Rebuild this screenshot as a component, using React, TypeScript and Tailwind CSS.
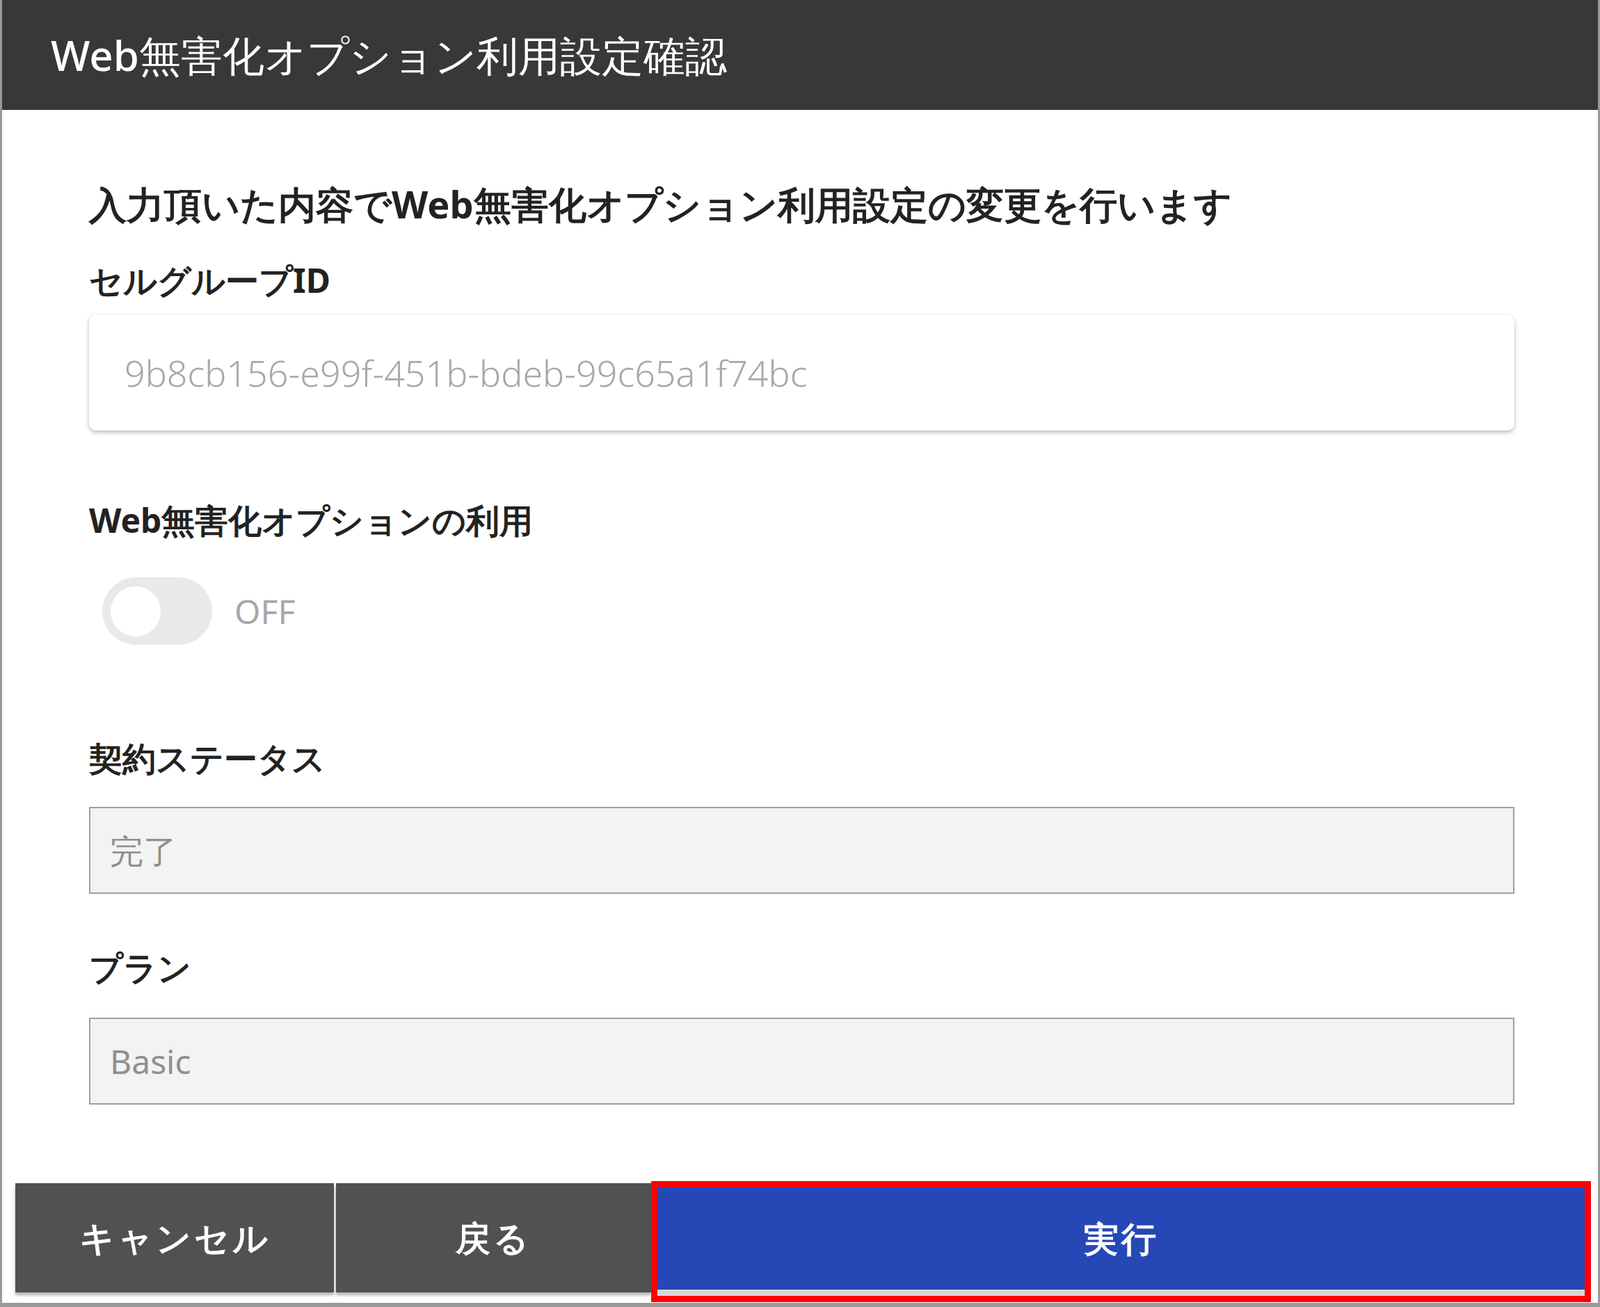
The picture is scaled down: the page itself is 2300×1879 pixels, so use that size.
const jp = "font-['Noto_Sans_CJK_JP','Noto_Sans',sans-serif]"

function Label({ children, className = '' }: { children: React.ReactNode; className?: string }) {
  return (
    <div className={`${jp} text-[48px] leading-[58px] font-bold text-[#222] ${className}`}>{children}</div>
  )
}

function ReadonlyBox({ value, className = '' }: { value: string; className?: string }) {
  return (
    <div
      className={`h-[125px] bg-[#f3f3f3] border-2 border-[#a0a0a0] flex items-center pl-[28px] text-[48px] text-[#8f8f8f] ${jp} ${className}`}
    >
      {value}
    </div>
  )
}

export default function App() {
  return (
    <div className="w-[2300px] h-[1879px] bg-white border-l-[3px] border-b-[6px] border-r-[3px] border-[#9a9a9a] flex flex-col overflow-hidden">
      <div className="h-[158px] bg-[#383838] flex items-center pl-[70px] shrink-0">
        <span className={`${jp} text-white text-[60px] font-medium`}>Web無害化オプション利用設定確認</span>
      </div>
      <div className="pl-[125px] pr-[120px] flex flex-col">
        <div className={`${jp} mt-[103px] text-[54px] leading-[65px] font-bold text-[#222]`}>
          入力頂いた内容でWeb無害化オプション利用設定の変更を行います
        </div>
        <Label className="mt-[48px]">セルグループID</Label>
        <div className="mt-[20px] h-[167px] bg-white rounded-[10px] shadow-[0_3px_6px_rgba(0,0,0,0.25),0_0_3px_rgba(0,0,0,0.06)] flex items-center pl-[51px]">
          <span className="font-['Roboto',sans-serif] font-light text-[52px] text-[#a8a8a8]">
            9b8cb156-e99f-451b-bdeb-99c65a1f74bc
          </span>
        </div>
        <Label className="mt-[100px]">Web無害化オプションの利用</Label>
        <div className="mt-[53px] flex items-center gap-[32px] pl-[19px]">
          <div className="w-[158px] h-[97px] rounded-full bg-[#e9e9e9] flex items-center pl-[12px]">
            <div className="w-[72px] h-[72px] rounded-full bg-white" />
          </div>
          <span className="font-['Roboto',sans-serif] text-[48px] text-[#a8a8a8]">OFF</span>
        </div>
        <Label className="mt-[134px]">契約ステータス</Label>
        <ReadonlyBox value="完了" className="mt-[41px]" />
        <Label className="mt-[77px]">プラン</Label>
        <ReadonlyBox value="Basic" className="mt-[43px] font-['Roboto',sans-serif]" />
      </div>
      <div className="mt-[113px] ml-[19px] flex items-start">
        <button
          className={`${jp} w-[458px] h-[157px] bg-[#515151] text-white text-[50px] font-bold tracking-[4px] shadow-[0_4px_4px_rgba(0,0,0,0.3)]`}
        >
          キャンセル
        </button>
        <button
          className={`${jp} ml-[3px] w-[453px] h-[157px] bg-[#515151] text-white text-[50px] font-bold tracking-[4px] shadow-[0_4px_4px_rgba(0,0,0,0.3)]`}
        >
          戻る
        </button>
        <div className="-mt-[3px] w-[1351px] h-[174px] border-[9px] border-[#ff0000] flex flex-col bg-[#d6d6d6]">
          <button className={`${jp} h-[147px] bg-[#2648b6] text-white text-[50px] font-bold tracking-[4px]`}>
            実行
          </button>
        </div>
      </div>
    </div>
  )
}
